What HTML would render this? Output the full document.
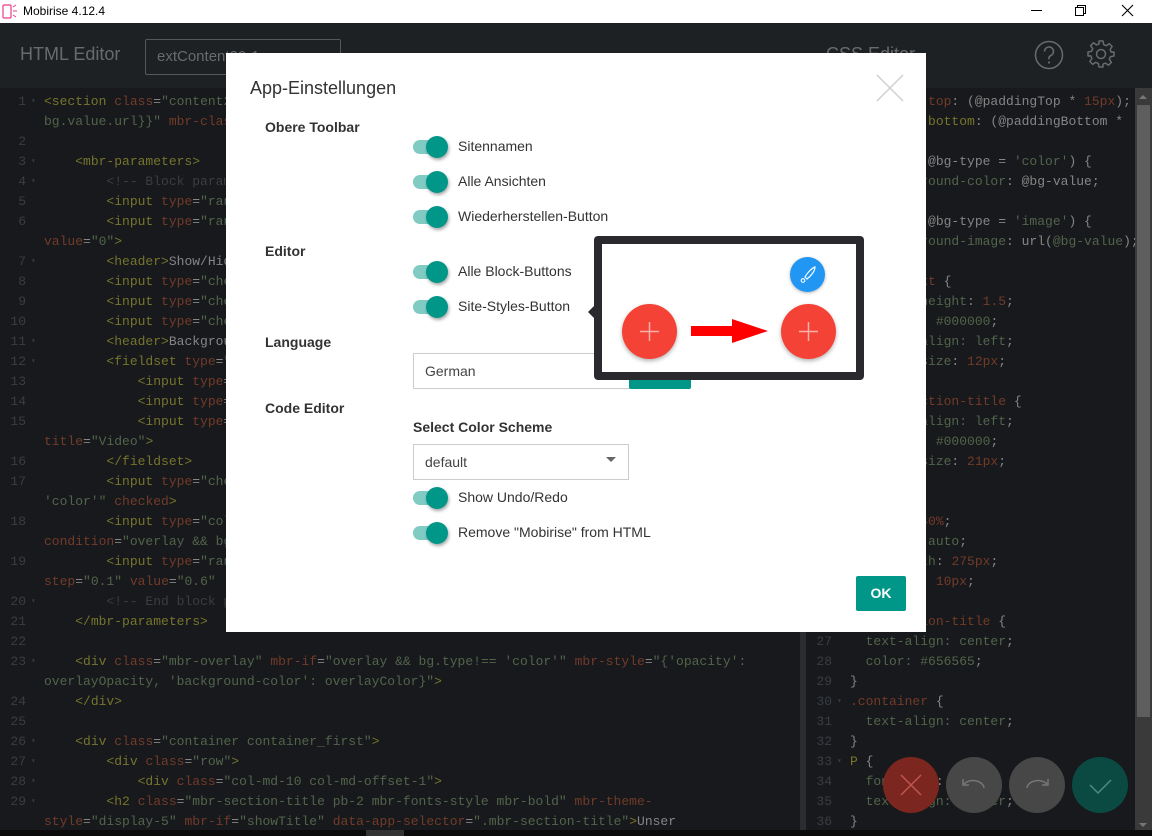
<!DOCTYPE html>
<html><head><meta charset="utf-8">
<style>
*{margin:0;padding:0;box-sizing:border-box}
body{width:1152px;height:836px;overflow:hidden;position:relative;background:#17191c;font-family:"Liberation Sans",sans-serif}
.tb{position:absolute;left:0;top:0;width:1152px;height:23px;background:#fff;font-size:12px;color:#000}
.hd{position:absolute;left:0;top:23px;width:1152px;height:65px;background:#1e2124}
.code{position:absolute;font-family:"Liberation Mono",monospace;font-size:13px;white-space:pre}
.r{position:absolute;height:20px;line-height:20px;left:0}
.r i{position:absolute;font-style:normal;color:#3a3d41;text-align:right;width:26px;left:0}
.r b{position:absolute;font-weight:normal;color:#3a3d41;font-size:8px;left:31px}
.r span.c0{position:absolute;left:44px;color:#858585}
.t{color:#77752c}.a{color:#733b29}.s{color:#52644b}.m{color:#3b3d40}.p{color:#858585}.nu{color:#733b29}
.modal{position:absolute;left:226px;top:53px;width:700px;height:579px;background:#fff}
.lbl{position:absolute;left:39px;font-weight:bold;font-size:14px;color:#333}
.tg{position:absolute;left:187px;width:36px;height:22px}
.tg:before{content:"";position:absolute;left:0;top:4px;width:30px;height:14px;border-radius:7px;background:#80cbc4}
.tg:after{content:"";position:absolute;left:13px;top:0;width:22px;height:22px;border-radius:50%;background:#009688;box-shadow:1px 2px 3px rgba(0,0,0,.35)}
.tl{position:absolute;left:232px;font-size:14px;color:#333}
.fab{position:absolute;width:56px;height:56px;border-radius:50%}
</style></head><body>
<div class="tb">
 <svg style="position:absolute;left:2px;top:4px" width="16" height="15"><rect x="1" y="1" width="8" height="13" rx="1" fill="none" stroke="#e83e8c" stroke-width="1.2"/><g stroke="#e83e8c" stroke-width="1"><line x1="11" y1="3" x2="14" y2="1"/><line x1="11" y1="7" x2="15" y2="7"/><line x1="11" y1="11" x2="14" y2="13"/></g></svg>
 <span style="position:absolute;left:23px;top:4px">Mobirise 4.12.4</span>
 <div style="position:absolute;left:1031px;top:10px;width:11px;height:1px;background:#000"></div>
 <svg style="position:absolute;left:1075px;top:5px" width="12" height="12"><rect x="0.5" y="2.5" width="8" height="8" fill="none" stroke="#000"/><path d="M2.5 2.5V0.5H10.5V8.5H8.5" fill="none" stroke="#000"/></svg>
 <svg style="position:absolute;left:1121px;top:4px" width="13" height="13"><path d="M1 1L12 12M12 1L1 12" stroke="#000" stroke-width="1.1"/></svg>
</div>
<div class="hd">
 <div style="position:absolute;left:20px;top:21px;font-size:18px;color:#686b6e">HTML Editor</div>
 <div style="position:absolute;left:145px;top:16px;width:196px;height:36px;border:1px solid #55585b;border-radius:2px;color:#686b6e;font-size:15px;padding:8px 11px">extContent20-1</div>
 <div style="position:absolute;left:826px;top:21px;font-size:18px;color:#686b6e">CSS Editor</div>
 <svg style="position:absolute;left:1034px;top:17px" width="30" height="30"><circle cx="15" cy="15" r="13.5" fill="none" stroke="#686b6e" stroke-width="1.5"/><path d="M10.5 11.5a4.5 4.5 0 1 1 6 4.2c-1.2.5-1.5 1.2-1.5 2.5v1" fill="none" stroke="#686b6e" stroke-width="1.6"/><circle cx="15" cy="22.5" r="1.1" fill="#686b6e"/></svg>
 <svg style="position:absolute;left:1086px;top:16px" width="30" height="30" viewBox="0 0 30 30"><path d="M13 2h4l.7 3.6 2.6 1.1 3-2.1 2.9 2.9-2.1 3 1.1 2.6L28 13v4l-3.6.7-1.1 2.6 2.1 3-2.9 2.9-3-2.1-2.6 1.1L17 28h-4l-.7-3.6-2.6-1.1-3 2.1-2.9-2.9 2.1-3-1.1-2.6L2 17v-4l3.6-.7 1.1-2.6-2.1-3 2.9-2.9 3 2.1 2.6-1.1z" fill="none" stroke="#686b6e" stroke-width="1.5" stroke-linejoin="round"/><circle cx="15" cy="15" r="4.5" fill="none" stroke="#686b6e" stroke-width="1.5"/></svg>
</div>
<!-- left editor -->
<div class="code" style="left:0;top:92px;width:800px;height:738px;background:#17191c">
<div class="r" style="top:0"><i>1</i><b>▾</b><span class="c0"><span class="t">&lt;section</span> <span class="a">class</span>=<span class="s">"content2 cid-rOkRb8x"</span> <span class="a">mbr-style</span>=<span class="s">"{'background-image':</span></span></div>
<div class="r" style="top:20px"><span class="c0"><span class="s">bg.value.url}}"</span> <span class="a">mbr-class</span>=<span class="s">"{'mbr-parallax-background': bg.parallax}"</span></span></div>
<div class="r" style="top:40px"><i>2</i></div>
<div class="r" style="top:60px"><i>3</i><b>▾</b><span class="c0">    <span class="t">&lt;mbr-parameters&gt;</span></span></div>
<div class="r" style="top:80px"><i>4</i><b>▾</b><span class="c0"><span class="m">        &lt;!-- Block parameters controls (Blue "Gear" panel) --&gt;</span></span></div>
<div class="r" style="top:100px"><i>5</i><span class="c0">        <span class="t">&lt;input</span> <span class="a">type</span>=<span class="s">"range"</span> <span class="a">inline</span> <span class="a">title</span>=<span class="s">"Padding Top"</span></span></div>
<div class="r" style="top:120px"><i>6</i><span class="c0">        <span class="t">&lt;input</span> <span class="a">type</span>=<span class="s">"range"</span> <span class="a">inline</span> <span class="a">title</span>=<span class="s">"Padding Bottom"</span></span></div>
<div class="r" style="top:140px"><span class="c0"><span class="a">value</span>=<span class="s">"0"</span><span class="t">&gt;</span></span></div>
<div class="r" style="top:160px"><i>7</i><b>▾</b><span class="c0">        <span class="t">&lt;header&gt;</span>Show/Hide<span class="t">&lt;/header&gt;</span></span></div>
<div class="r" style="top:180px"><i>8</i><span class="c0">        <span class="t">&lt;input</span> <span class="a">type</span>=<span class="s">"checkbox"</span></span></div>
<div class="r" style="top:200px"><i>9</i><span class="c0">        <span class="t">&lt;input</span> <span class="a">type</span>=<span class="s">"checkbox"</span></span></div>
<div class="r" style="top:220px"><i>10</i><span class="c0">        <span class="t">&lt;input</span> <span class="a">type</span>=<span class="s">"checkbox"</span></span></div>
<div class="r" style="top:240px"><i>11</i><b>▾</b><span class="c0">        <span class="t">&lt;header&gt;</span>Background<span class="t">&lt;/header&gt;</span></span></div>
<div class="r" style="top:260px"><i>12</i><b>▾</b><span class="c0">        <span class="t">&lt;fieldset</span> <span class="a">type</span>=<span class="s">"background"</span></span></div>
<div class="r" style="top:280px"><i>13</i><span class="c0">            <span class="t">&lt;input</span> <span class="a">type</span>=<span class="s">"image"</span></span></div>
<div class="r" style="top:300px"><i>14</i><span class="c0">            <span class="t">&lt;input</span> <span class="a">type</span>=<span class="s">"color"</span></span></div>
<div class="r" style="top:320px"><i>15</i><span class="c0">            <span class="t">&lt;input</span> <span class="a">type</span>=<span class="s">"video"</span></span></div>
<div class="r" style="top:340px"><span class="c0"><span class="a">title</span>=<span class="s">"Video"</span><span class="t">&gt;</span></span></div>
<div class="r" style="top:360px"><i>16</i><span class="c0">        <span class="t">&lt;/fieldset&gt;</span></span></div>
<div class="r" style="top:380px"><i>17</i><span class="c0">        <span class="t">&lt;input</span> <span class="a">type</span>=<span class="s">"checkbox"</span></span></div>
<div class="r" style="top:400px"><span class="c0"><span class="s">'color'"</span> <span class="a">checked</span><span class="t">&gt;</span></span></div>
<div class="r" style="top:420px"><i>18</i><span class="c0">        <span class="t">&lt;input</span> <span class="a">type</span>=<span class="s">"color"</span></span></div>
<div class="r" style="top:440px"><span class="c0"><span class="a">condition</span>=<span class="s">"overlay &amp;&amp; bg.type"</span></span></div>
<div class="r" style="top:460px"><i>19</i><span class="c0">        <span class="t">&lt;input</span> <span class="a">type</span>=<span class="s">"range"</span></span></div>
<div class="r" style="top:480px"><span class="c0"><span class="a">step</span>=<span class="s">"0.1"</span> <span class="a">value</span>=<span class="s">"0.6"</span></span></div>
<div class="r" style="top:500px"><i>20</i><b>▾</b><span class="c0"><span class="m">        &lt;!-- End block parameters --&gt;</span></span></div>
<div class="r" style="top:520px"><i>21</i><span class="c0">    <span class="t">&lt;/mbr-parameters&gt;</span></span></div>
<div class="r" style="top:540px"><i>22</i></div>
<div class="r" style="top:560px"><i>23</i><b>▾</b><span class="c0">    <span class="t">&lt;div</span> <span class="a">class</span>=<span class="s">"mbr-overlay"</span> <span class="a">mbr-if</span>=<span class="s">"overlay &amp;&amp; bg.type!== 'color'"</span> <span class="a">mbr-style</span>=<span class="s">"{'opacity':</span></span></div>
<div class="r" style="top:580px"><span class="c0"><span class="s">overlayOpacity, 'background-color': overlayColor}"</span><span class="t">&gt;</span></span></div>
<div class="r" style="top:600px"><i>24</i><span class="c0">    <span class="t">&lt;/div&gt;</span></span></div>
<div class="r" style="top:620px"><i>25</i></div>
<div class="r" style="top:640px"><i>26</i><b>▾</b><span class="c0">    <span class="t">&lt;div</span> <span class="a">class</span>=<span class="s">"container container_first"</span><span class="t">&gt;</span></span></div>
<div class="r" style="top:660px"><i>27</i><b>▾</b><span class="c0">        <span class="t">&lt;div</span> <span class="a">class</span>=<span class="s">"row"</span><span class="t">&gt;</span></span></div>
<div class="r" style="top:680px"><i>28</i><b>▾</b><span class="c0">            <span class="t">&lt;div</span> <span class="a">class</span>=<span class="s">"col-md-10 col-md-offset-1"</span><span class="t">&gt;</span></span></div>
<div class="r" style="top:700px"><i>29</i><b>▾</b><span class="c0">        <span class="t">&lt;h2</span> <span class="a">class</span>=<span class="s">"mbr-section-title pb-2 mbr-fonts-style mbr-bold"</span> <span class="a">mbr-theme-</span></span></div>
<div class="r" style="top:720px"><span class="c0"><span class="a">style</span>=<span class="s">"display-5"</span> <span class="a">mbr-if</span>=<span class="s">"showTitle"</span> <span class="a">data-app-selector</span>=<span class="s">".mbr-section-title"</span><span class="t">&gt;</span>Unser</span></div>
</div>
<div style="position:absolute;left:800px;top:88px;width:6px;height:742px;background:#2a2c2f"></div>
<div style="position:absolute;left:0;top:830px;width:1152px;height:6px;background:#0b0b0c"></div>
<div style="position:absolute;left:366px;top:830px;width:38px;height:6px;background:#333"></div>
<!-- right editor -->
<div class="code" style="left:806px;top:92px;width:329px;height:738px;background:#17191c">
<div class="r" style="top:0"><span class="c0"><span class="a">  padding-top</span>: (@paddingTop * <span class="nu">15px</span>);</span></div>
<div class="r" style="top:20px"><span class="c0"><span class="t">  padding-bottom</span>: (@paddingBottom *</span></div>
<div class="r" style="top:60px"><span class="c0">  &amp; when (@bg-type = <span class="s">'color'</span>) {</span></div>
<div class="r" style="top:80px"><span class="c0"><span class="s">    background-color</span>: @bg-value;</span></div>
<div class="r" style="top:120px"><span class="c0">  &amp; when (@bg-type = <span class="s">'image'</span>) {</span></div>
<div class="r" style="top:140px"><span class="c0"><span class="s">    background-image</span>: url(<span class="s">@bg-value</span>);</span></div>
<div class="r" style="top:180px"><span class="c0"><span class="a">  .mbr-text</span> {</span></div>
<div class="r" style="top:200px"><span class="c0"><span class="s">    line-height</span>: <span class="nu">1.5</span>;</span></div>
<div class="r" style="top:220px"><span class="c0"><span class="s">    color: #000000</span>;</span></div>
<div class="r" style="top:240px"><span class="c0"><span class="s">    text-align: left</span>;</span></div>
<div class="r" style="top:260px"><span class="c0"><span class="s">    font-size</span>: <span class="nu">12px</span>;</span></div>
<div class="r" style="top:300px"><span class="c0"><span class="a">  .mbr-section-title</span> {</span></div>
<div class="r" style="top:320px"><span class="c0"><span class="s">    text-align: left</span>;</span></div>
<div class="r" style="top:340px"><span class="c0"><span class="s">    color: #000000</span>;</span></div>
<div class="r" style="top:360px"><span class="c0"><span class="s">    font-size</span>: <span class="nu">21px</span>;</span></div>
<div class="r" style="top:420px"><span class="c0"><span class="s">  width: </span><span class="nu">40%</span>;</span></div>
<div class="r" style="top:440px"><span class="c0"><span class="s">  margin: auto</span>;</span></div>
<div class="r" style="top:460px"><span class="c0"><span class="s">  max-width</span>: <span class="nu">275px</span>;</span></div>
<div class="r" style="top:480px"><span class="c0"><span class="s">  padding: </span><span class="nu">10px</span>;</span></div>
<div class="r" style="top:520px"><i>26</i><b>▾</b><span class="c0"><span class="a">.mbr-section-title</span> {</span></div>
<div class="r" style="top:540px"><i>27</i><span class="c0"><span class="s">  text-align: center</span>;</span></div>
<div class="r" style="top:560px"><i>28</i><span class="c0"><span class="s">  color: #656565</span>;</span></div>
<div class="r" style="top:580px"><i>29</i><span class="c0">}</span></div>
<div class="r" style="top:600px"><i>30</i><b>▾</b><span class="c0"><span class="a">.container</span> {</span></div>
<div class="r" style="top:620px"><i>31</i><span class="c0"><span class="s">  text-align: center</span>;</span></div>
<div class="r" style="top:640px"><i>32</i><span class="c0">}</span></div>
<div class="r" style="top:660px"><i>33</i><b>▾</b><span class="c0"><span class="t">P</span> {</span></div>
<div class="r" style="top:680px"><i>34</i><span class="c0"><span class="s">  font-size</span>: <span class="nu">18px</span>;</span></div>
<div class="r" style="top:700px"><i>35</i><span class="c0"><span class="s">  text-align: center</span>;</span></div>
<div class="r" style="top:720px"><i>36</i><span class="c0">}</span></div>
</div>
<div style="position:absolute;left:1135px;top:88px;width:17px;height:742px;background:#3a3a3a"></div>
<div style="position:absolute;left:1137px;top:105px;width:13px;height:612px;background:#5e5e5e"></div>
<div style="position:absolute;left:1139px;top:95px;width:0;height:0;border:4px solid transparent;border-bottom-color:#777;border-top:0"></div>
<div style="position:absolute;left:1139px;top:823px;width:0;height:0;border:4px solid transparent;border-top-color:#777;border-bottom:0"></div>
<!-- fabs -->
<div class="fab" style="left:883px;top:757px;background:#7b271f"><svg width="56" height="56"><path d="M18 18L38 38M38 18L18 38" stroke="#c0574e" stroke-width="1.5"/></svg></div>
<div class="fab" style="left:946px;top:757px;background:#474747"><svg width="56" height="56"><path d="M18 27a11 8 0 0 1 20 4" fill="none" stroke="#777" stroke-width="1.5"/><path d="M17 22v6h6" fill="none" stroke="#777" stroke-width="1.5"/></svg></div>
<div class="fab" style="left:1009px;top:757px;background:#474747"><svg width="56" height="56"><path d="M38 27a11 8 0 0 0 -20 4" fill="none" stroke="#777" stroke-width="1.5"/><path d="M39 22v6h-6" fill="none" stroke="#777" stroke-width="1.5"/></svg></div>
<div class="fab" style="left:1072px;top:757px;background:#0b4a42"><svg width="56" height="56"><path d="M18 28l8 8 13-13" fill="none" stroke="#4a8a80" stroke-width="1.5"/></svg></div>
<!-- modal -->
<div class="modal">
 <div style="position:absolute;left:24px;top:25px;font-size:18px;color:#333">App-Einstellungen</div>
 <svg style="position:absolute;left:650px;top:21px" width="28" height="28"><path d="M1 1L27 27M27 1L1 27" stroke="#cfcfcf" stroke-width="1.5"/></svg>
 <div class="lbl" style="top:66px">Obere Toolbar</div>
 <div class="tg" style="top:83px"></div><div class="tl" style="top:85px">Sitennamen</div>
 <div class="tg" style="top:118px"></div><div class="tl" style="top:120px">Alle Ansichten</div>
 <div class="tg" style="top:153px"></div><div class="tl" style="top:155px">Wiederherstellen-Button</div>
 <div class="lbl" style="top:190px">Editor</div>
 <div class="tg" style="top:208px"></div><div class="tl" style="top:210px">Alle Block-Buttons</div>
 <div class="tg" style="top:243px"></div><div class="tl" style="top:245px">Site-Styles-Button</div>
 <div class="lbl" style="top:281px">Language</div>
 <div style="position:absolute;left:187px;top:300px;width:217px;height:36px;border:1px solid #ccc;font-size:14px;color:#444;padding:9px 11px">German</div>
 <div style="position:absolute;left:403px;top:300px;width:62px;height:36px;background:#009688;border-radius:2px"></div>
 <div class="lbl" style="top:347px">Code Editor</div>
 <div class="lbl" style="left:187px;top:366px">Select Color Scheme</div>
 <div style="position:absolute;left:187px;top:391px;width:216px;height:36px;border:1px solid #ccc;font-size:14px;color:#444;padding:9px 11px">default</div>
 <div style="position:absolute;left:380px;top:404px;width:0;height:0;border:5px solid transparent;border-top:5px solid #666;border-bottom:0"></div>
 <div class="tg" style="top:434px"></div><div class="tl" style="top:436px">Show Undo/Redo</div>
 <div class="tg" style="top:469px"></div><div class="tl" style="top:471px">Remove "Mobirise" from HTML</div>
 <div style="position:absolute;left:630px;top:523px;width:50px;height:35px;background:#009688;border-radius:2px;color:#fff;font-weight:bold;font-size:14px;text-align:center;line-height:35px">OK</div>
</div>
<!-- popup -->
<div style="position:absolute;left:588px;top:306px;width:0;height:0;border:6px solid transparent;border-right-color:#2a2a2e;border-left:0"></div>
<div style="position:absolute;left:594px;top:236px;width:270px;height:144px;background:#2a2a2e;border-radius:4px"></div>
<div style="position:absolute;left:602px;top:244px;width:254px;height:128px;background:#fff"></div>
<div style="position:absolute;left:790px;top:257px;width:35px;height:35px;border-radius:50%;background:#2196f3;box-shadow:0 1px 3px rgba(0,0,0,.3)"><svg width="35" height="35"><path d="M25 10c-3 1-8 6-10 10l2 2c4-3 8-8 8-12z" fill="none" stroke="#fff" stroke-width="1.2"/><circle cx="13" cy="23.5" r="1.8" fill="none" stroke="#fff" stroke-width="1.1"/></svg></div>
<div style="position:absolute;left:622px;top:304px;width:55px;height:55px;border-radius:50%;background:#f44336;box-shadow:0 2px 4px rgba(0,0,0,.3)"><svg width="55" height="55"><path d="M27.5 18v19M18 27.5h19" stroke="#f8b0aa" stroke-width="1.5"/></svg></div>
<div style="position:absolute;left:781px;top:304px;width:55px;height:55px;border-radius:50%;background:#f44336;box-shadow:0 2px 4px rgba(0,0,0,.3)"><svg width="55" height="55"><path d="M27.5 18v19M18 27.5h19" stroke="#f8b0aa" stroke-width="1.5"/></svg></div>
<svg style="position:absolute;left:690px;top:318px" width="80" height="26"><path d="M1 8H42V1L78 13L42 25V18H1z" fill="#f00"/></svg>
</body></html>
